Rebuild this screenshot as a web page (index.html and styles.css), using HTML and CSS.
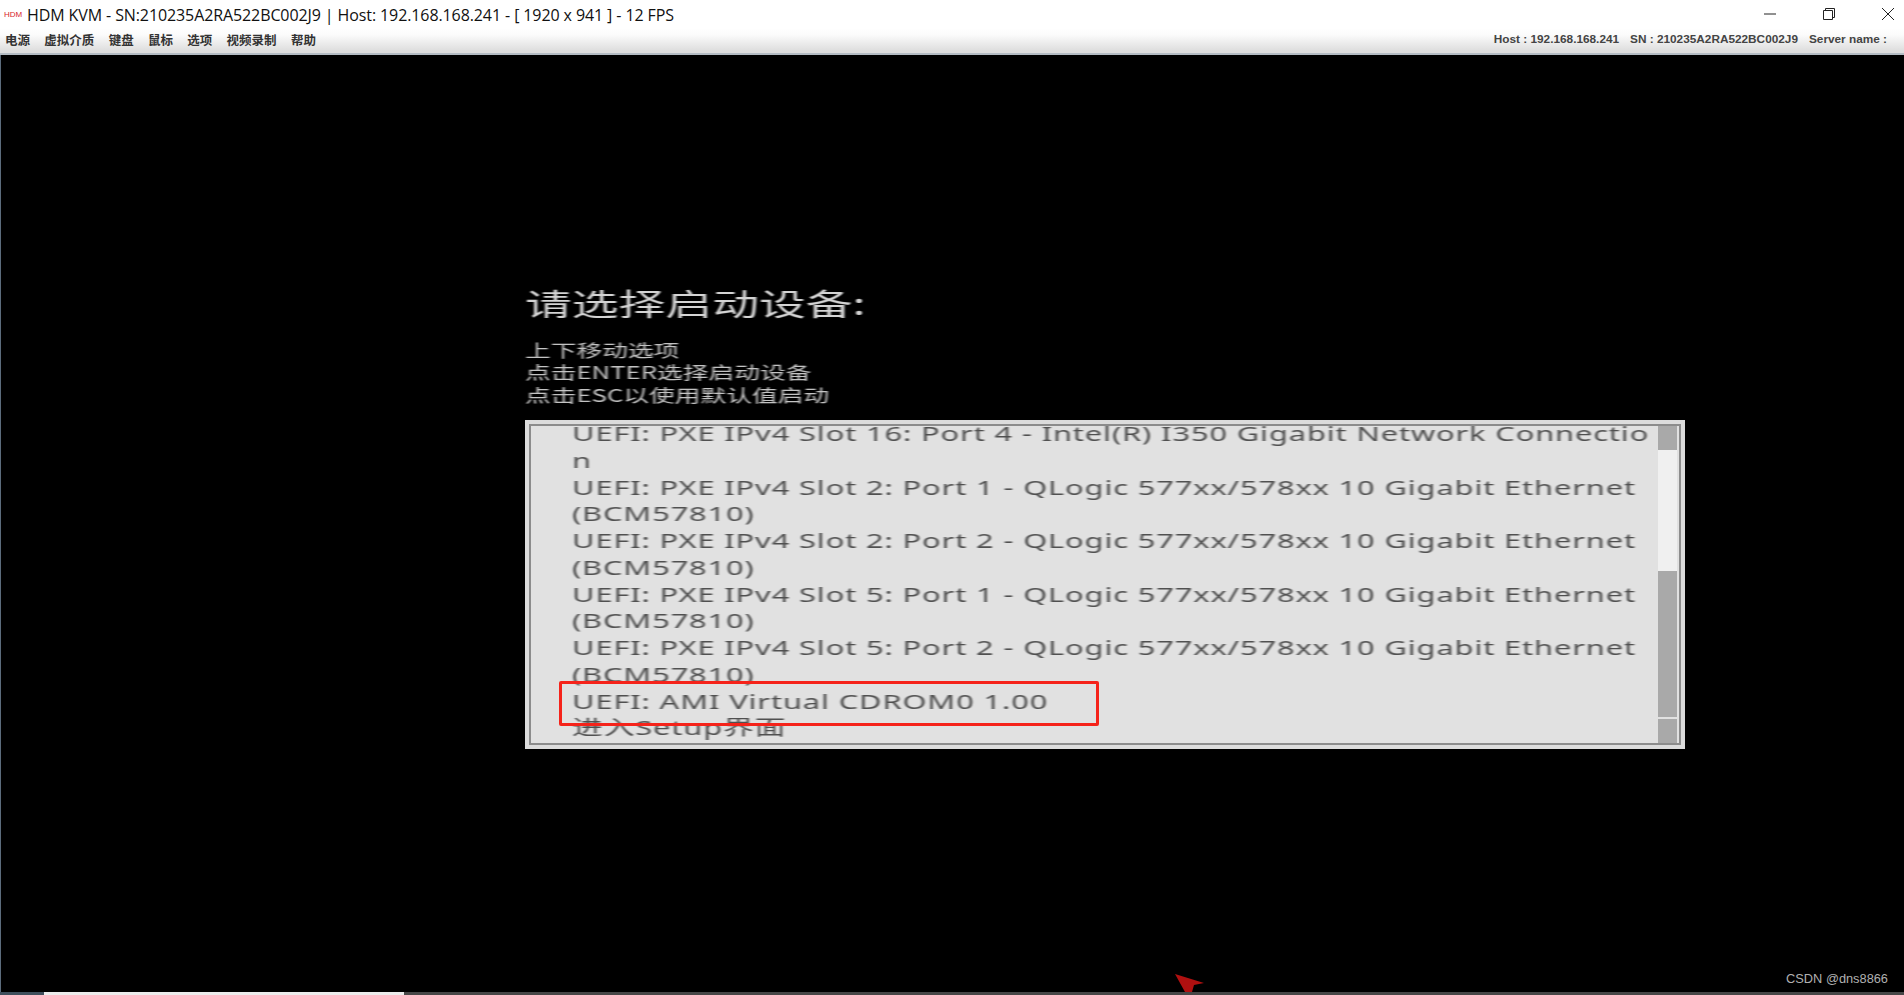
FILE: index.html
```html
<!DOCTYPE html>
<html lang="zh-CN">
<head>
<meta charset="utf-8">
<title>HDM KVM</title>
<link rel="stylesheet" href="styles.css">
</head>
<body>
<div class="titlebar">
  <div class="title-left">
    <span class="logo">HDM</span>
    <span class="title-text">HDM KVM - SN:210235A2RA522BC002J9 | Host: 192.168.168.241 - [ 1920 x 941 ] - 12 FPS</span>
  </div>
  <div class="window-buttons">
    <svg class="win-icon" viewBox="0 0 14 14"><path d="M1 7H13" fill="none" stroke="#222" stroke-width="1"/></svg>
    <svg class="win-icon" viewBox="0 0 14 14"><path d="M1.5 3.5H10.5V12.5H1.5ZM3.5 3.5V1.5H12.5V10.5H10.5" fill="none" stroke="#222" stroke-width="1"/></svg>
    <svg class="win-icon" viewBox="0 0 14 14"><path d="M1 1L13 13M13 1L1 13" fill="none" stroke="#222" stroke-width="1"/></svg>
  </div>
</div>
<div class="menubar">
  <nav class="menu">
    <span>电源</span><span>虚拟介质</span><span>键盘</span><span>鼠标</span><span>选项</span><span>视频录制</span><span>帮助</span>
  </nav>
  <div class="status">
    <span>Host : 192.168.168.241</span><span>SN : 210235A2RA522BC002J9</span><span>Server name :</span>
  </div>
</div>
<main class="screen">
  <h1 class="boot-title">请选择启动设备:</h1>
  <div class="hints">
    <div>上下移动选项</div>
    <div>点击ENTER选择启动设备</div>
    <div>点击ESC以使用默认值启动</div>
  </div>
  <section class="panel">
    <div class="panel-inner">
      <div class="list">
        <div class="list-text">
          <div>UEFI: PXE IPv4 Slot 16: Port 4 - Intel(R) I350 Gigabit Network Connectio</div>
          <div>n</div>
          <div>UEFI: PXE IPv4 Slot 2: Port 1 - QLogic 577xx/578xx 10 Gigabit Ethernet</div>
          <div>(BCM57810)</div>
          <div>UEFI: PXE IPv4 Slot 2: Port 2 - QLogic 577xx/578xx 10 Gigabit Ethernet</div>
          <div>(BCM57810)</div>
          <div>UEFI: PXE IPv4 Slot 5: Port 1 - QLogic 577xx/578xx 10 Gigabit Ethernet</div>
          <div>(BCM57810)</div>
          <div>UEFI: PXE IPv4 Slot 5: Port 2 - QLogic 577xx/578xx 10 Gigabit Ethernet</div>
          <div>(BCM57810)</div>
          <div>UEFI: AMI Virtual CDROM0 1.00</div>
          <div>进入Setup界面</div>
        </div>
      </div>
      <div class="scrollbar">
        <div class="sb-button"></div>
        <div class="sb-track"></div>
        <div class="sb-thumb"></div>
        <div class="sb-button"></div>
      </div>
    </div>
    <div class="highlight"></div>
  </section>
  <svg class="cursor" viewBox="0 0 29 18"><path d="M0 0L29 9L19 11L17 18L10 18Z" fill="#b01010"/></svg>
  <div class="watermark">CSDN @dns8866</div>
</main>
<div class="bottom-strip">
  <div class="strip-a"></div>
  <div class="strip-b"></div>
  <div class="strip-c"></div>
</div>
</body>
</html>
```
FILE: styles.css
```css
* { box-sizing: border-box; }
html, body { margin: 0; height: 100%; }
body {
  width: 1904px;
  height: 995px;
  overflow: hidden;
  display: flex;
  flex-direction: column;
  background: #000;
  font-family: "Noto Sans", "Noto Sans CJK SC", sans-serif;
}
.titlebar {
  height: 29px;
  flex: none;
  background: #fff;
  display: flex;
  justify-content: space-between;
  align-items: center;
}
.title-left { display: flex; align-items: center; padding-left: 4px; }
.logo {
  width: 23px;
  font: 8px/1 "Liberation Sans", sans-serif;
  color: #d8262c;
}
.title-text {
  font: 16px/1 "Open Sans", sans-serif;
  color: #111;
  letter-spacing: -0.1px;
}
.window-buttons { display: flex; gap: 45px; padding: 0 9px 2px 0; }
.win-icon { width: 14px; height: 14px; display: block; }
.menubar {
  height: 26px;
  flex: none;
  display: flex;
  justify-content: space-between;
  align-items: center;
  background: linear-gradient(#fefefe, #fbfbfb 25%, #dedede 90%);
  border-bottom: 2px solid #b4bcc4;
  padding: 0 17px 2px 5px;
}
.menu {
  display: flex;
  gap: 14.3px;
  font: bold 12.5px/1 "Noto Sans CJK SC", sans-serif;
  color: #333;
}
.status {
  display: flex;
  gap: 11px;
  font: bold 11.8px/1 "Liberation Sans", sans-serif;
  color: #444;
}
.screen {
  flex: 1;
  min-height: 0;
  position: relative;
  background: #000;
  border-left: 1px solid #5c6c7c;
  padding: 225px 0 0 524px;
}
.boot-title {
  margin: 0;
  width: 220px;
  height: 44px;
  font: 400 30px/44px "Noto Sans CJK SC", sans-serif;
  color: #d4d4d4;
  transform: scaleX(1.56);
  transform-origin: left center;
  white-space: nowrap;
  filter: blur(0.6px);
}
.hints {
  margin-top: 15px;
  width: 175px;
  height: 68px;
  font: 17.5px/22.4px "Noto Sans CJK SC", sans-serif;
  color: #c4c4c4;
  white-space: nowrap;
  transform: scaleX(1.47);
  transform-origin: left center;
  filter: blur(0.6px);
}
.panel {
  position: relative;
  width: 1160px;
  height: 329px;
  margin-top: 13px;
  border: 4px solid #dcdcdc;
}
.panel-inner {
  height: 100%;
  display: flex;
  background: #e1e1e1;
  border: 2px solid #8c8c8c;
}
.list {
  flex: 1;
  min-width: 0;
  padding-left: 41px;
}
.list-text {
  width: 720px;
  margin-top: -6px;
  font: 20.5px/26.75px "Noto Sans", "Noto Sans CJK SC", sans-serif;
  letter-spacing: 0.6px;
  color: #505050;
  white-space: nowrap;
  transform: scaleX(1.5);
  transform-origin: left center;
  filter: blur(0.6px);
}
.scrollbar {
  flex: none;
  width: 19px;
  margin-right: 2px;
  display: flex;
  flex-direction: column;
}
.sb-button { height: 24px; flex: none; background: #a9a9a9; }
.sb-track { height: 121px; flex: none; background: #f0f0f0; }
.sb-thumb { height: 146px; flex: none; background: #a9a9a9; margin-bottom: 2px; }
.highlight {
  position: absolute;
  left: 30px;
  top: 257px;
  width: 540px;
  height: 45px;
  border: 3px solid #f5231a;
  border-radius: 2px;
}
.cursor {
  position: absolute;
  left: 1174px;
  bottom: 0;
  width: 29px;
  height: 18px;
}
.watermark {
  position: absolute;
  right: 16px;
  bottom: 6px;
  font: 12.8px/1 "Liberation Sans", sans-serif;
  color: #b0b0b0;
}
.bottom-strip { height: 3px; flex: none; display: flex; }
.strip-a { width: 44px; background: #3f4f5c; }
.strip-b { width: 360px; background: #ececec; }
.strip-c { flex: 1; background: #474747; }
```
